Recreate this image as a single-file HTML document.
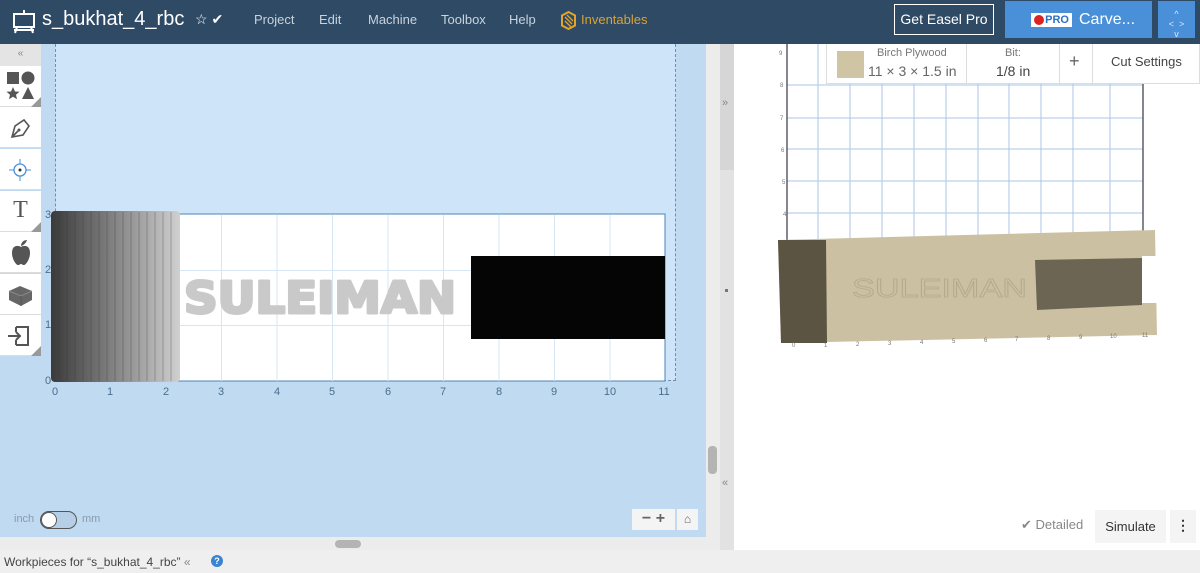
<!DOCTYPE html>
<html><head><meta charset="utf-8"><style>
*{margin:0;padding:0;box-sizing:border-box}
body{width:1200px;height:573px;overflow:hidden;font-family:"Liberation Sans",sans-serif;background:#fff;position:relative}
.abs{position:absolute}
#hdr{left:0;top:0;width:1200px;height:44px;background:#2e4a65}
.nav{color:#c9d3de;font-size:13px;top:12px}
#canvas{left:0;top:44px;width:706px;height:493px;background:#c0daf1}
#mat{left:55px;top:44px;width:621px;height:337px;background:#cde4f9;border-left:1px dashed #6c8eb0;border-right:1px dashed #6c8eb0;border-bottom:1px dashed #6c8eb0}
.tool{left:0;width:41px;height:41px;background:#fff;border-bottom:1px solid #ddd}
</style></head><body>
<div id="hdr" class="abs">
 <svg class="abs" style="left:11px;top:9px" width="26" height="26" viewBox="0 0 26 26" fill="none" stroke="#fff" stroke-width="2"><rect x="3" y="5" width="20" height="13"/><path d="M13 1v4M6 18l-2 6M20 18l2 6M3 21h20"/></svg>
 <div class="abs" style="left:42px;top:8px;color:#fff;font-size:20px">s_bukhat_4_rbc</div>
 <div class="abs" style="left:195px;top:11px;color:#fff;font-size:14px">☆ ✔</div>
 <div class="abs nav" style="left:254px">Project</div>
 <div class="abs nav" style="left:319px">Edit</div>
 <div class="abs nav" style="left:368px">Machine</div>
 <div class="abs nav" style="left:441px">Toolbox</div>
 <div class="abs nav" style="left:509px">Help</div>
 <svg class="abs" style="left:561px;top:11px" width="15" height="19" viewBox="0 0 15 19"><path d="M7.5 1L14 4.5v10L7.5 18 1 14.5v-10z" fill="none" stroke="#e2a42b" stroke-width="2"/><path d="M4 6l7 7M4 10l6 6M6 4l6 6" stroke="#e2a42b" stroke-width="1.3"/></svg>
 <div class="abs nav" style="left:581px;color:#d9a235">Inventables</div>
 <div class="abs" style="left:894px;top:4px;width:100px;height:31px;border:1px solid #fff;color:#fff;font-size:14px;text-align:center;line-height:29px">Get Easel Pro</div>
 <div class="abs" style="left:1005px;top:1px;width:147px;height:37px;background:#4a90d9;color:#fff;font-size:16px;line-height:37px">
  <span class="abs" style="left:26px;top:12px;width:41px;height:14px;background:#fff;color:#2e70c0;font-size:11px;line-height:14px;font-weight:bold;text-align:right;padding-right:3px"><span style="position:absolute;left:3px;top:2px;width:10px;height:10px;border-radius:50%;background:#d22"></span>PRO</span>
  <span class="abs" style="left:74px;top:0">Carve...</span></div>
 <div class="abs" style="left:1158px;top:1px;width:37px;height:37px;background:#4a90d9;color:#dbe9f8;font-size:9px;text-align:center;line-height:10px;padding-top:8px">^<br>&lt;&nbsp;&nbsp;&gt;<br>v</div>
</div>
<div id="canvas" class="abs"></div>
<div id="mat" class="abs"></div>
<div class="abs" style="left:0;top:44px;width:41px;height:22px;background:#e4e4e4;color:#888;font-size:10px;text-align:center;line-height:20px">«</div>
<div class="abs tool" style="top:66px"><svg width="41" height="41"><rect x="7" y="6" width="12" height="12" fill="#555"/><circle cx="28" cy="12" r="6.5" fill="#555"/><path d="M13 21l2 4.5 4.5.3-3.5 3 1 4.5-4-2.5-4 2.5 1-4.5-3.5-3 4.5-.3z" fill="#555"/><path d="M28 21l6 12h-12z" fill="#555"/><path d="M41 31v10h-10z" fill="#999"/></svg></div>
<div class="abs tool" style="top:107px"><svg width="41" height="41"><path d="M12 30l3-11 9-6 5 6-6 9z M12 30l7-7" fill="none" stroke="#555" stroke-width="1.6"/><circle cx="19" cy="23" r="1.5" fill="#555"/></svg></div>
<div class="abs tool" style="top:149px"><svg width="41" height="41"><circle cx="20" cy="21" r="6" fill="none" stroke="#4a90d9" stroke-width="1.3"/><circle cx="20" cy="21" r="1.5" fill="#333"/><path d="M20 10v5M20 27v5M9 21h5M26 21h5" stroke="#4a90d9"/></svg></div>
<div class="abs tool" style="top:191px"><div style="font-family:'Liberation Serif',serif;font-size:24px;color:#555;text-align:center;line-height:38px">T</div><svg class="abs" style="left:0;top:0" width="41" height="41"><path d="M41 31v10h-10z" fill="#999"/></svg></div>
<div class="abs tool" style="top:232px"><svg width="41" height="41"><path d="M21 15c-3-2-9-2-9 6 0 6 4 12 6 12s2-1 3-1 1 1 3 1 6-6 6-12c0-8-6-8-9-6z" fill="#555"/><path d="M21 14c0-4 3-6 6-6-1 3-3 5-6 6z" fill="#555"/></svg></div>
<div class="abs tool" style="top:274px"><svg width="41" height="41"><path d="M9 17l11-5 12 5v9l-11 6-12-6z" fill="#666"/><path d="M9 17l12 5 11-5" fill="none" stroke="#888"/><path d="M21 22v10" stroke="#555"/></svg></div>
<div class="abs tool" style="top:315px;height:41px"><svg width="41" height="41"><path d="M16 12h12v18h-12M16 12v5M16 25v5" fill="none" stroke="#555" stroke-width="2"/><path d="M8 21h12M16 17l4 4-4 4" fill="none" stroke="#555" stroke-width="2"/><path d="M41 31v10h-10z" fill="#999"/></svg></div>
<svg class="abs" style="left:0;top:200px" width="706" height="200" font-family="Liberation Sans" font-size="11" fill="#555">
 <rect x="55" y="14" width="610" height="167" fill="#fff" stroke="#4a86b8"/>
 <g stroke="#d6e6f5">
  <path d="M110.5 15v166M166 15v166M221.5 15v166M277 15v166M332.5 15v166M388 15v166M443.5 15v166M499 15v166M554.5 15v166M610 15v166M56 70.5h609M56 125.5h609"/>
 </g>
 <rect x="471" y="56" width="194" height="83" fill="#050505"/>
 <defs><linearGradient id="g" x1="0" x2="1"><stop offset="0" stop-color="#3a3a3a"/><stop offset="1" stop-color="#d0d0d0"/></linearGradient></defs>
 <rect x="51" y="11" width="129" height="171" rx="4" fill="url(#g)"/>
 <g stroke="#333" stroke-opacity=".3"><path d="M59 12v169M67 12v169M75 12v169M83 12v169M91 12v169M99 12v169M107 12v169M115 12v169M123 12v169M131 12v169M139 12v169M147 12v169M155 12v169M163 12v169M171 12v169"/></g>
 <text x="184" y="113" font-size="44" font-weight="bold" fill="#c9c9c9" stroke="#c9c9c9" stroke-width="3" stroke-linejoin="round" textLength="272" lengthAdjust="spacingAndGlyphs" style="font-family:'DejaVu Sans'">SULEIMAN</text>
 <g text-anchor="middle" fill="#4a6d8e"><text x="55" y="195">0</text><text x="110" y="195">1</text><text x="166" y="195">2</text><text x="221" y="195">3</text><text x="277" y="195">4</text><text x="332" y="195">5</text><text x="388" y="195">6</text><text x="443" y="195">7</text><text x="499" y="195">8</text><text x="554" y="195">9</text><text x="610" y="195">10</text><text x="664" y="195">11</text></g>
 <g fill="#4a6d8e"><text x="45" y="18">3</text><text x="45" y="73">2</text><text x="45" y="128">1</text><text x="45" y="184">0</text></g>
</svg>
<div class="abs" style="left:14px;top:513px;font-size:11px;color:#8a9aaa">inch</div>
<div class="abs" style="left:40px;top:511px;width:37px;height:18px;border:1px solid #555;border-radius:9px;background:#b6cfe6"><div style="width:16px;height:16px;border-radius:50%;background:#fff;border:1px solid #555"></div></div>
<div class="abs" style="left:82px;top:513px;font-size:11px;color:#8a9aaa">mm</div>
<div class="abs" style="left:632px;top:509px;width:43px;height:21px;background:#f4f4f4;color:#666;font-size:16px;font-weight:bold;line-height:20px;text-align:center">− +</div>
<div class="abs" style="left:677px;top:509px;width:21px;height:21px;background:#f4f4f4;color:#666;font-size:12px;line-height:21px;text-align:center">⌂</div>
<div class="abs" style="left:0;top:537px;width:706px;height:13px;background:#ececec"></div>
<div class="abs" style="left:335px;top:540px;width:26px;height:8px;border-radius:4px;background:#b4b4b4"></div>
<div class="abs" style="left:706px;top:44px;width:14px;height:506px;background:#ececec"></div>
<div class="abs" style="left:708px;top:446px;width:9px;height:28px;border-radius:4px;background:#b4b4b4"></div>
<div class="abs" style="left:720px;top:44px;width:14px;height:506px;background:#e2e2e2"></div>
<div class="abs" style="left:720px;top:44px;width:14px;height:126px;background:#d6d6d6"></div>
<div class="abs" style="left:722px;top:97px;font-size:11px;color:#888">»</div>
<div class="abs" style="left:722px;top:477px;font-size:11px;color:#888">«</div>
<div class="abs" style="left:725px;top:289px;width:3px;height:10px;border-top:3px dotted #777"></div>
<svg class="abs" style="left:734px;top:44px" width="466" height="320" font-family="Liberation Sans" font-size="6" fill="#777">
 <g stroke="#a9c6ea" stroke-width="1">
  <path d="M53 0v200M84 0v200M116 0v200M148 0v200M180 0v200M212 0v200M244 0v200M275 0v200M307 0v200M339 0v200M376 0v200"/>
  <path d="M53 41h356M53 74h356M53 105h356M53 137h356M53 169h356"/>
 </g>
 <path d="M53 0v200M409 0v200" stroke="#445" stroke-width="1.3"/>
 <path d="M44 196l377-10 2 105-376 8z" fill="#cbc0a1"/>
 <path d="M44 196l48 0 1 103-46 0z" fill="#5b5443"/>
 <path d="M301 216l107-2 0 47-105 5z" fill="#6d6553"/>
 <path d="M408 212l15 0 0 47-15 0z" fill="#fff"/>
 <text x="118" y="253" font-size="26" fill="none" stroke="#b4a98b" stroke-width="0.8" textLength="175" lengthAdjust="spacingAndGlyphs">SULEIMAN</text>
 <g><text x="58" y="303">0</text><text x="90" y="303">1</text><text x="122" y="302">2</text><text x="154" y="301">3</text><text x="186" y="300">4</text><text x="218" y="299">5</text><text x="250" y="298">6</text><text x="281" y="297">7</text><text x="313" y="296">8</text><text x="345" y="295">9</text><text x="376" y="294">10</text><text x="408" y="293">11</text></g>
 <g><text x="45" y="11">9</text><text x="46" y="43">8</text><text x="46" y="76">7</text><text x="47" y="108">6</text><text x="48" y="140">5</text><text x="49" y="172">4</text></g>
</svg>
<div class="abs" style="left:826px;top:44px;width:374px;height:40px;background:#fff;border:1px solid #ddd;border-top:none"></div>
<div class="abs" style="left:837px;top:51px;width:27px;height:27px;background:#cfc4a3"></div>
<div class="abs" style="left:877px;top:47px;font-size:11px;color:#777">Birch Plywood</div>
<div class="abs" style="left:868px;top:63px;font-size:14px;color:#666">11 × 3 × 1.5 in</div>
<div class="abs" style="left:966px;top:44px;width:1px;height:40px;background:#ddd"></div>
<div class="abs" style="left:1005px;top:47px;font-size:11px;color:#777">Bit:</div>
<div class="abs" style="left:996px;top:63px;font-size:14px;color:#444">1/8 in</div>
<div class="abs" style="left:1059px;top:44px;width:1px;height:40px;background:#ddd"></div>
<div class="abs" style="left:1069px;top:51px;font-size:18px;color:#666">+</div>
<div class="abs" style="left:1092px;top:44px;width:1px;height:40px;background:#ddd"></div>
<div class="abs" style="left:1111px;top:54px;font-size:13px;color:#444">Cut Settings</div>
<div class="abs" style="left:1021px;top:517px;font-size:13px;color:#888">✔ Detailed</div>
<div class="abs" style="left:1095px;top:510px;width:71px;height:33px;background:#f4f4f4;font-size:13px;color:#333;text-align:center;line-height:33px">Simulate</div>
<div class="abs" style="left:1170px;top:510px;width:26px;height:33px;background:#f4f4f4;font-size:14px;font-weight:bold;color:#333;text-align:center;line-height:31px">⋮</div>
<div class="abs" style="left:0;top:550px;width:1200px;height:23px;background:#efefef"></div>
<div class="abs" style="left:4px;top:555px;font-size:12px;color:#444">Workpieces for “s_bukhat_4_rbc” <span style="color:#888">«</span></div>
<div class="abs" style="left:211px;top:555px;width:12px;height:12px;border-radius:50%;background:#3b84cf;color:#fff;font-size:9px;font-weight:bold;text-align:center;line-height:12px">?</div>
</body></html>
